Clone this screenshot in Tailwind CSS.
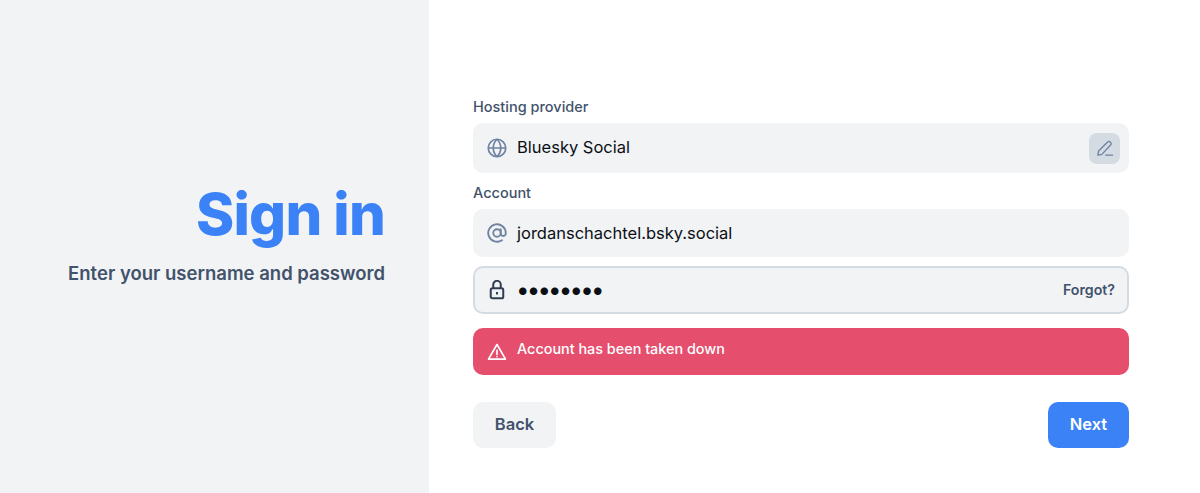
<!DOCTYPE html>
<html lang="en">
<head>
    <meta charset="UTF-8">
    <title>Sign in</title>
    <script src="https://cdn.jsdelivr.net/npm/@tailwindcss/browser@4"></script>
</head>
<body class="bg-white font-['Inter',sans-serif] [font-optical-sizing:none] overflow-hidden">
    <div class="flex h-[493px] w-[1200px]">
        <!-- Left panel -->
        <div class="w-[429px] bg-[#f1f3f5] flex flex-col items-end justify-center pr-[44px] pb-[27px]">
            <h1 class="text-[58px] leading-[64px] font-extrabold tracking-[-0.8px] text-[#3b82f6]">Sign in</h1>
            <p class="mt-[15px] text-[18.5px] leading-[24px] font-semibold text-[#42526b]">Enter your username and password</p>
        </div>

        <!-- Form -->
        <div class="w-[771px] pl-[44px] pr-[71px] pt-[97px]">
            <div class="text-[14.5px] leading-[20px] font-[550] text-[#42526b] mb-[6px]">Hosting provider</div>
            <div class="h-[50px] rounded-[10px] bg-[#f1f3f5] flex items-center pl-[14px] pr-[9px]">
                <svg class="w-[20px] h-[20px] text-[#6f82a0] shrink-0" viewBox="0 0 24 24" fill="none" stroke="currentColor" stroke-width="2"><circle cx="12" cy="12" r="10.5"/><path d="M1.5 12h21M12 1.5c-6 6-6 15 0 21M12 1.5c6 6 6 15 0 21"/></svg>
                <span class="ml-[10px] text-[16.5px] leading-[24px] -mt-[2px] text-[#0b0f14]">Bluesky Social</span>
                <button class="ml-auto w-[31px] h-[31px] rounded-[8px] bg-[#d4dbe2] flex items-center justify-center">
                    <svg class="w-[18px] h-[18px] text-[#6f82a0]" viewBox="0 0 24 24" fill="none" stroke="currentColor" stroke-width="1.8" stroke-linecap="round" stroke-linejoin="round"><path d="M2.5 21.5l1-5.5L15.5 4a2.3 2.3 0 0 1 3.4 0l.6.6a2.3 2.3 0 0 1 0 3.3L7.8 20.5l-5.3 1z"/><path d="M13 21.5h9"/></svg>
                </button>
            </div>

            <div class="mt-[10px] text-[14.5px] leading-[20px] font-[550] text-[#42526b] mb-[6px]">Account</div>
            <div class="h-[48px] rounded-[10px] bg-[#f1f3f5] flex items-center pl-[14px]">
                <svg class="w-[20px] h-[20px] text-[#6f82a0] shrink-0" viewBox="0 0 24 24" fill="none" stroke="currentColor" stroke-width="2.2" stroke-linecap="round"><circle cx="12" cy="12" r="4.5"/><path d="M16.5 7.5v6a3.2 3.2 0 0 0 6 0V12a10.5 10.5 0 1 0-4.5 8.6"/></svg>
                <span class="ml-[10px] text-[16.5px] leading-[24px] text-[#0b0f14]">jordanschachtel.bsky.social</span>
            </div>

            <div class="mt-[9px] h-[48px] rounded-[10px] bg-[#f1f3f5] border-2 border-[#d4dbe2] flex items-center pl-[12px] pr-[12px]">
                <svg class="w-[20px] h-[20px] text-[#2f3e52] shrink-0" viewBox="0 0 24 24" fill="none" stroke="currentColor" stroke-width="2.4"><rect x="4.5" y="10" width="15" height="12" rx="2"/><path d="M7.5 10V5.5a4.5 4.5 0 0 1 9 0V10"/><path d="M12 14.5v3"/></svg>
                <span class="ml-[9px] text-[24px] leading-[24px] -mt-px text-[#0b0f14] tracking-[-2.8px]">••••••••</span>
                <span class="ml-auto text-[14.2px] font-semibold text-[#42526b]">Forgot?</span>
            </div>

            <div class="mt-[14px] h-[47px] rounded-[10px] bg-[#e54e6d] flex items-center pl-[14px]">
                <svg class="w-[20px] h-[20px] text-white shrink-0" viewBox="0 0 24 24" fill="none" stroke="currentColor" stroke-width="2" stroke-linejoin="round" stroke-linecap="round"><path d="M12 3L1.8 20.5h20.4L12 3z"/><path d="M12 10v5M12 17.6v.2"/></svg>
                <span class="ml-[10px] text-[14.4px] font-[550] text-white -mt-[5px]">Account has been taken down</span>
            </div>

            <div class="mt-[27px] flex justify-between">
                <button class="w-[83px] h-[46px] rounded-[10px] bg-[#f1f3f5] pb-[2px] text-[16.5px] font-semibold text-[#42526b]">Back</button>
                <button class="w-[81px] h-[46px] rounded-[10px] bg-[#3b82f6] pb-[2px] text-[16.5px] font-semibold text-white">Next</button>
            </div>
        </div>
    </div>
</body>
</html>
